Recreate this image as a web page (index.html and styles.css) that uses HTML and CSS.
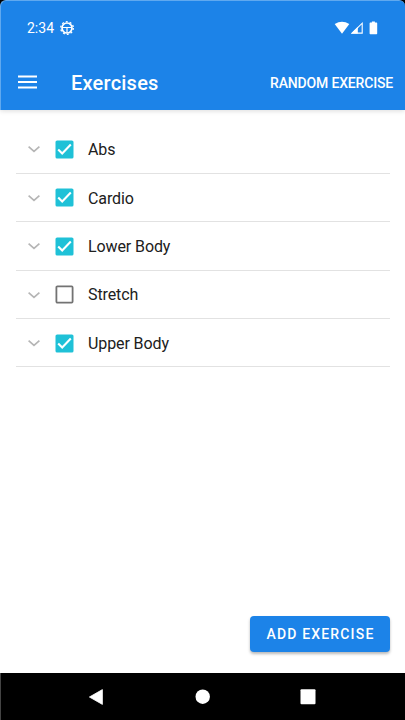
FILE: index.html
```
<!DOCTYPE html>
<html lang="en">
<head>
<meta charset="utf-8">
<title>Exercises</title>
<link rel="stylesheet" href="styles.css">
</head>
<body>
<svg class="symbols" aria-hidden="true">
  <symbol id="chevron" viewBox="0 0 12 8"><path d="M.6 1.700 6 6.400l5.400-4.700" fill="none" stroke="#b5b5b5" stroke-width="1.700"/></symbol>
  <symbol id="checked" viewBox="0 0 19 19"><rect x=".5" y=".5" width="18" height="18" rx="1.600" fill="#1fc1d7"/><path d="m3.200 9.400 4 4 8.600-8.800" fill="none" stroke="#fff" stroke-width="2.100"/></symbol>
  <symbol id="unchecked" viewBox="0 0 19 19"><rect x="1.400" y="1.400" width="16.200" height="16.200" rx="1" fill="none" stroke="#737373" stroke-width="1.800"/></symbol>
</svg>
<div class="screen">
  <header class="top">
    <div class="status">
      <span class="time">2:34</span>
      <svg class="gear" viewBox="0 0 14 14" fill="none" stroke="#fff"><circle cx="7" cy="7" r="5" stroke-width="1.700"/><circle cx="7" cy="7" r="6.300" stroke-width="1.300" stroke-dasharray="1.900 2.058"/><path d="M2 6.500h10M7 7v5" stroke-width="1.200"/></svg>
      <svg class="signals" viewBox="0 0 46 14" fill="#fff"><path d="M.7 3.100Q8 -1.600 15.300 3.100L8 12.800Z"/><path d="M28.200 2.200v9.900H18.100Z" fill="none" stroke="#fff" stroke-width="1.100"/><path d="M17 12.600 23.800 5.800v6.800Z"/><path d="M37.900 .5h3v1h1.600q.7 0 .7.700v10.400q0 .7-.7.700h-6.200q-.7 0-.7-.7V2.200q0-.7.700-.7h1.600Z"/></svg>
    </div>
    <div class="toolbar">
      <svg class="menu" viewBox="0 0 19 14"><path d="M0 1.500h19M0 7h19M0 12.500h19" stroke="#fff" stroke-width="1.900"/></svg>
      <h1>Exercises</h1>
      <span class="random">RANDOM EXERCISE</span>
    </div>
  </header>
  <main>
    <ul>
      <li><svg class="chev"><use href="#chevron"/></svg><svg class="box"><use href="#checked"/></svg><span>Abs</span></li>
      <li><svg class="chev"><use href="#chevron"/></svg><svg class="box"><use href="#checked"/></svg><span>Cardio</span></li>
      <li><svg class="chev"><use href="#chevron"/></svg><svg class="box"><use href="#checked"/></svg><span>Lower Body</span></li>
      <li><svg class="chev"><use href="#chevron"/></svg><svg class="box"><use href="#unchecked"/></svg><span>Stretch</span></li>
      <li><svg class="chev"><use href="#chevron"/></svg><svg class="box"><use href="#checked"/></svg><span>Upper Body</span></li>
    </ul>
    <button>ADD EXERCISE</button>
  </main>
  <nav>
    <svg viewBox="0 0 16 16"><path d="M1.400 8 14.400 .6v14.800Z" fill="#fff" stroke="#fff" stroke-width=".8" stroke-linejoin="round"/></svg>
    <svg viewBox="0 0 16 16"><circle cx="8.700" cy="7.700" r="7.200" fill="#fff"/></svg>
    <svg viewBox="0 0 16 16"><rect x=".5" y=".2" width="15" height="15" rx="1" fill="#fff"/></svg>
  </nav>
</div>
</body>
</html>
```
FILE: styles.css
```
* { box-sizing: border-box; }
body { margin: 0; background: #000; font-family: Roboto, "Liberation Sans", sans-serif; }
.symbols { display: none; }
.screen { width: 405px; height: 720px; display: flex; flex-direction: column; overflow: hidden; }
.top {
  height: 110px; flex: none; z-index: 1; color: #fff; background: #1c83e8;
  border-top: 1px solid #60a9ef; border-left: 1px solid #60a9ef;
  border-radius: 6px 6px 0 0; box-shadow: 0 1px 5px rgba(0,0,0,.14);
}
.status { height: 54px; display: flex; align-items: center; padding: 0 25px 0 26px; }
.time { font-size: 14px; line-height: 20px; }
.gear { width: 14px; height: 14px; margin-left: 6px; }
.signals { width: 46px; height: 14px; margin-left: auto; }
.toolbar { height: 54px; display: flex; align-items: center; padding: 0 12px 0 17px; }
.menu { width: 19px; height: 14px; margin-right: 34px; }
h1 { margin: 0; padding-top: 2px; font-size: 20px; line-height: 24px; font-weight: 500; letter-spacing: .22px; }
.random { margin-left: auto; padding-top: 1px; font-size: 14px; font-weight: 500; letter-spacing: -.17px; }
main { flex: 1; display: flex; flex-direction: column; padding: 15.800px 15px 21px 16px; background: #fff; }
ul { list-style: none; margin: 0; padding: 0; }
li {
  height: 48.400px; display: flex; align-items: center; padding: 0 0 1px 12px;
  color: #202020; font-size: 16px; letter-spacing: -.1px;
  background: linear-gradient(#e2e2e2, #e2e2e2) bottom / 100% 1.400px no-repeat;
}
li span { padding-top: .6px; }
.chev { width: 12px; height: 8px; margin-right: 15px; }
.box { width: 19px; height: 19px; margin-right: 14px; }
button {
  width: 140px; height: 36px; margin-top: auto; align-self: flex-end; padding: 0 0 0 1px;
  border: 0; border-radius: 4px; color: #fff; background: #1c83e8;
  font: 500 14px Roboto, "Liberation Sans", sans-serif; letter-spacing: 1.160px;
  box-shadow: 0 2px 3px rgba(0,0,0,.28);
}
nav { height: 47px; flex: none; display: flex; align-items: center; gap: 90px; padding-left: 87px; background: #000; border-left: 1px solid #444; }
nav svg { width: 16px; height: 16px; }
```
